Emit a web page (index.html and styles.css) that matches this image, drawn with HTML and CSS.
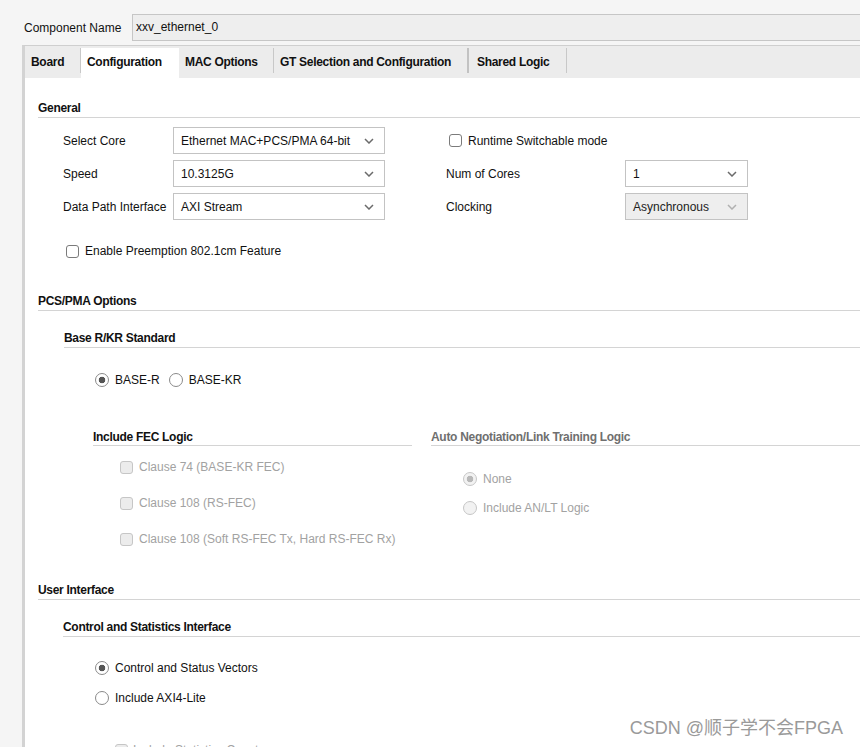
FILE: index.html
```html
<!DOCTYPE html>
<html>
<head>
<meta charset="utf-8">
<link rel="stylesheet" href="styles.css">
</head>
<body>
<div class="top">
  <span class="cn-label">Component Name</span>
  <div class="cn-input">xxv_ethernet_0</div>
</div>
<div class="panel">
  <div class="tabs">
    <div class="tab t-board">Board</div><div class="sep"></div>
    <div class="tab t-config active">Configuration</div>
    <div class="tab t-mac">MAC Options</div><div class="sep"></div>
    <div class="tab t-gt">GT Selection and Configuration</div><div class="sep thick"></div>
    <div class="tab t-shared">Shared Logic</div><div class="sep"></div>
  </div>
  <div class="content">
    <div class="h h-general">General</div>
    <div class="grid">
      <div class="lbl">Select Core</div>
      <div class="sel"><span>Ethernet MAC+PCS/PMA 64-bit</span><svg class="chev" width="10" height="6" viewBox="0 0 10 6"><path d="M1 1 L5 5 L9 1" fill="none" stroke="#6b6b6b" stroke-width="1.5"/></svg></div>
      <div></div>
      <div class="opt rt"><span class="cb"></span><span>Runtime Switchable mode</span></div>
      <div></div>

      <div class="lbl">Speed</div>
      <div class="sel"><span>10.3125G</span><svg class="chev" width="10" height="6" viewBox="0 0 10 6"><path d="M1 1 L5 5 L9 1" fill="none" stroke="#6b6b6b" stroke-width="1.5"/></svg></div>
      <div></div>
      <div class="lbl">Num of Cores</div>
      <div class="sel"><span>1</span><svg class="chev" width="10" height="6" viewBox="0 0 10 6"><path d="M1 1 L5 5 L9 1" fill="none" stroke="#6b6b6b" stroke-width="1.5"/></svg></div>

      <div class="lbl">Data Path Interface</div>
      <div class="sel"><span>AXI Stream</span><svg class="chev" width="10" height="6" viewBox="0 0 10 6"><path d="M1 1 L5 5 L9 1" fill="none" stroke="#6b6b6b" stroke-width="1.5"/></svg></div>
      <div></div>
      <div class="lbl">Clocking</div>
      <div class="sel dis"><span>Asynchronous</span><svg class="chev" width="10" height="6" viewBox="0 0 10 6"><path d="M1 1 L5 5 L9 1" fill="none" stroke="#b0b0b0" stroke-width="1.5"/></svg></div>
    </div>
    <div class="opt preempt"><span class="cb"></span><span>Enable Preemption 802.1cm Feature</span></div>

    <div class="h h-pcs">PCS/PMA Options</div>
    <div class="sub sub-base">
      <div class="h h-sub">Base R/KR Standard</div>
      <div class="radios-inline">
        <div class="opt"><span class="rb on"></span><span>BASE-R</span></div>
        <div class="opt"><span class="rb"></span><span>BASE-KR</span></div>
      </div>
      <div class="fec-row">
        <div class="fec-col">
          <div class="h h-fec">Include FEC Logic</div>
          <div class="list list-fec">
            <div class="opt disabled"><span class="cb"></span><span>Clause 74 (BASE-KR FEC)</span></div>
            <div class="opt disabled"><span class="cb"></span><span>Clause 108 (RS-FEC)</span></div>
            <div class="opt disabled"><span class="cb"></span><span>Clause 108 (Soft RS-FEC Tx, Hard RS-FEC Rx)</span></div>
          </div>
        </div>
        <div class="an-col">
          <div class="h h-fec h-dis">Auto Negotiation/Link Training Logic</div>
          <div class="list list-an">
            <div class="opt disabled"><span class="rb on"></span><span>None</span></div>
            <div class="opt disabled"><span class="rb"></span><span>Include AN/LT Logic</span></div>
          </div>
        </div>
      </div>
    </div>

    <div class="h h-ui">User Interface</div>
    <div class="sub sub-ctrl">
      <div class="h h-sub">Control and Statistics Interface</div>
      <div class="list list-ctrl">
        <div class="opt"><span class="rb on"></span><span>Control and Status Vectors</span></div>
        <div class="opt"><span class="rb"></span><span>Include AXI4-Lite</span></div>
      </div>
      <div class="opt disabled stats"><span class="cb"></span><span>Include Statistics Counters</span></div>
    </div>
  </div>
</div>
<div class="watermark">CSDN @顺子学不会FPGA</div>
</body>
</html>
```
FILE: styles.css
```css
html, body {
  margin: 0;
  padding: 0;
}
body {
  width: 860px;
  height: 747px;
  overflow: hidden;
  position: relative;
  background: #f5f5f5;
  font-family: "Liberation Sans", Arial, sans-serif;
  font-size: 12px;
  color: #111;
}
.top {
  display: flex;
  align-items: center;
  height: 27px;
  margin-top: 14px;
  padding-left: 24px;
}
.cn-label {
  width: 108px;
}
.cn-input {
  flex: 1;
  height: 27px;
  box-sizing: border-box;
  border: 1px solid #c6c6c6;
  border-right: none;
  background: #eeeeee;
  padding-left: 3px;
  line-height: 25px;
}
.panel {
  margin: 4px 0 0 22px;
  border-top: 1px solid #cfcfcf;
  border-left: 3px solid #d3d3d3;
  background: #fff;
  height: 701px;
  overflow: hidden;
}
.tabs {
  display: flex;
  align-items: flex-end;
  height: 32px;
  background: #ececec;
}
.tab {
  height: 30px;
  line-height: 28px;
  padding-left: 6px;
  box-sizing: border-box;
  font-weight: bold;
  letter-spacing: -0.3px;
  white-space: nowrap;
}
.tab.active {
  background: #fff;
}
.t-board { width: 55px; }
.t-config { width: 98px; }
.t-mac { width: 94px; }
.t-gt { width: 193px; }
.t-shared { width: 97px; padding-left: 8px; }
.sep {
  align-self: flex-start;
  margin-top: 2px;
  width: 1px;
  height: 25px;
  background: #c8c8c8;
}
.sep.thick {
  width: 2px;
  background: #c2c2c2;
}
.content {
  padding-left: 13px;
}
.h {
  font-weight: bold;
  letter-spacing: -0.3px;
  line-height: 14px;
  border-bottom: 1px solid #d4d4d4;
  padding-top: 1px;
  padding-bottom: 2px;
  white-space: nowrap;
}
.h-general {
  margin-top: 22px;
  padding-bottom: 2px;
}
.grid {
  margin-top: 9px;
  margin-left: 25px;
  display: grid;
  grid-template-columns: 110px 212px 61px 179px 123px;
  grid-auto-rows: 27px;
  row-gap: 6px;
  align-items: center;
}
.lbl {
  white-space: nowrap;
}
.sel {
  height: 27px;
  box-sizing: border-box;
  border: 1px solid #c3c3c3;
  background: #fff;
  display: flex;
  align-items: center;
  justify-content: space-between;
  padding: 0 10px 0 7px;
  white-space: nowrap;
}
.sel.dis {
  background: #eeeeee;
  color: #222;
}
.chev {
  display: block;
  flex: none;
}
.opt {
  display: flex;
  align-items: center;
  height: 14px;
  line-height: 14px;
  white-space: nowrap;
}
.rt {
  margin-left: 3px;
}
.cb {
  width: 13px;
  height: 13px;
  box-sizing: border-box;
  border: 1px solid #7b7b7b;
  border-radius: 3px;
  background: #fff;
  margin-right: 6px;
  flex: none;
}
.rb {
  width: 14px;
  height: 14px;
  box-sizing: border-box;
  border: 1px solid #8a8a8a;
  border-radius: 50%;
  background: #fff;
  margin-right: 6px;
  flex: none;
}
.rb.on {
  background: radial-gradient(circle, #555 0, #555 3px, #fff 3.6px);
}
.opt.disabled {
  color: #a2a2a2;
}
.opt.disabled .cb {
  border-color: #c6c6c6;
  background: #ececec;
}
.opt.disabled .rb {
  border-color: #c6c6c6;
  background: #f2f2f2;
}
.opt.disabled .rb.on {
  background: radial-gradient(circle, #b8b8b8 0, #b8b8b8 3px, #f2f2f2 3.6px);
}
.preempt {
  margin-top: 24px;
  margin-left: 28px;
}
.h-pcs {
  margin-top: 35px;
}
.sub-base {
  margin-left: 26px;
}
.h-sub {
  margin-top: 19px;
}
.radios-inline {
  display: flex;
  margin-top: 25px;
  margin-left: 31px;
  gap: 9px;
}
.fec-row {
  display: flex;
  align-items: flex-start;
  margin-top: 42px;
  margin-left: 29px;
  gap: 19px;
}
.fec-col {
  width: 319px;
  flex: none;
}
.an-col {
  flex: 1;
}
.h-fec {
  padding-bottom: 1px;
}
.h-dis {
  color: #6f6f6f;
}
.list {
  display: flex;
  flex-direction: column;
}
.list-fec {
  margin-top: 14px;
  margin-left: 27px;
  gap: 22px;
}
.list-an {
  margin-top: 26px;
  margin-left: 32px;
  gap: 15px;
}
.h-ui {
  margin-top: 36px;
}
.sub-ctrl {
  margin-left: 25px;
}
.list-ctrl {
  margin-top: 24px;
  margin-left: 32px;
  gap: 16px;
}
.stats {
  margin-top: 38px;
  margin-left: 52px;
}
.stats .cb {
  margin-right: 5px;
}
.watermark {
  position: absolute;
  right: 17px;
  top: 717px;
  font-family: "Liberation Sans", "Noto Sans CJK SC", sans-serif;
  font-size: 18px;
  line-height: 22px;
  color: #9a9a9a;
  text-shadow: 0 0 1px #fff;
  white-space: nowrap;
}
```
